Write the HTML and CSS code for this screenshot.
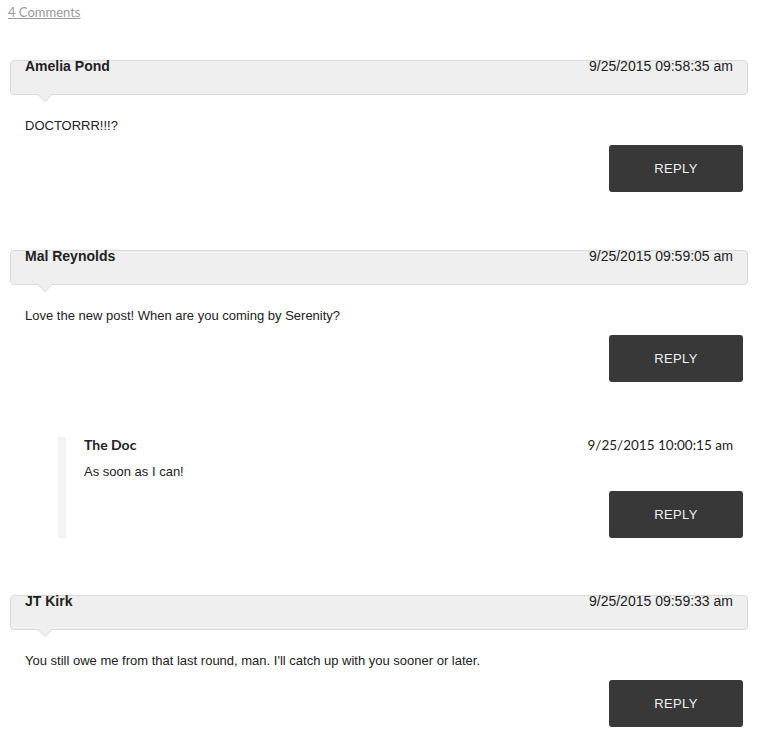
FILE: index.html
```html
<!DOCTYPE html>
<html>
<head>
<meta charset="utf-8">
<link rel="stylesheet" href="styles.css">
</head>
<body>
<div class="page">
  <a class="count" href="#">4 Comments</a>
  <ol class="comments">
    <li class="comment">
      <div class="comment-head">
        <span class="author">Amelia Pond</span>
        <span class="date">9/25/2015 09:58:35 am</span>
      </div>
      <p class="comment-text">DOCTORRR!!!?</p>
      <div class="actions"><button class="reply">REPLY</button></div>
    </li>
    <li class="comment thread">
      <div class="comment-head">
        <span class="author">Mal Reynolds</span>
        <span class="date">9/25/2015 09:59:05 am</span>
      </div>
      <p class="comment-text">Love the new post! When are you coming by Serenity?</p>
      <div class="actions"><button class="reply">REPLY</button></div>
      <ol class="children">
        <li class="child">
          <div class="child-head">
            <span class="child-author">The Doc</span>
            <span class="child-date">9/25/2015 10:00:15 am</span>
          </div>
          <p class="child-text">As soon as I can!</p>
          <div class="actions child-actions"><button class="reply">REPLY</button></div>
        </li>
      </ol>
    </li>
    <li class="comment">
      <div class="comment-head">
        <span class="author">JT Kirk</span>
        <span class="date">9/25/2015 09:59:33 am</span>
      </div>
      <p class="comment-text">You still owe me from that last round, man. I'll catch up with you sooner or later.</p>
      <div class="actions"><button class="reply">REPLY</button></div>
    </li>
  </ol>
</div>
</body>
</html>
```
FILE: styles.css
```css
html, body {
  margin: 0;
  padding: 0;
  background: #ffffff;
}

.page {
  padding: 4px 12px 0 10px;
  font-family: "Liberation Sans", Arial, sans-serif;
  color: #222222;
}

.count {
  display: block;
  margin-left: -2px;
  font-family: Lato, "Liberation Sans", sans-serif;
  font-size: 13px;
  line-height: 16px;
  color: #9a9a9a;
  text-decoration: underline;
}

.comments {
  list-style: none;
  margin: 40px 0 0 0;
  padding: 0;
}

.comment {
  margin: 0 0 58px 0;
  padding: 0;
}

.comment.thread {
  margin-bottom: 57px;
}

.comment-head {
  position: relative;
  box-sizing: border-box;
  height: 35px;
  display: flex;
  justify-content: space-between;
  align-items: flex-start;
  padding: 0 14px;
  background: #efefef;
  border: 1px solid #dadada;
  border-radius: 4px;
}

.comment-head::before {
  content: "";
  position: absolute;
  left: 26px;
  top: 100%;
  width: 0;
  height: 0;
  border-style: solid;
  border-width: 8px 8px 0 8px;
  border-color: #d6d6d6 transparent transparent transparent;
}

.comment-head::after {
  content: "";
  position: absolute;
  left: 27px;
  top: 100%;
  width: 0;
  height: 0;
  border-style: solid;
  border-width: 7px 7px 0 7px;
  border-color: #efefef transparent transparent transparent;
}

.author {
  margin-top: -3px;
  font-size: 14px;
  font-weight: bold;
  line-height: 16px;
  color: #222222;
}

.date {
  margin-top: -3px;
  font-size: 14px;
  line-height: 16px;
  color: #222222;
}

.comment-text {
  margin: 22px 0 0 0;
  padding-left: 15px;
  font-size: 13px;
  line-height: 18px;
  color: #222222;
}

.actions {
  display: flex;
  justify-content: flex-end;
  margin-top: 10px;
  padding-right: 5px;
}

.child-actions {
  margin-top: 10px;
}

.reply {
  width: 134px;
  height: 47px;
  padding: 0;
  border: none;
  border-radius: 3px;
  background: #383838;
  color: #f0f0f0;
  font-family: "Liberation Sans", Arial, sans-serif;
  font-size: 13px;
  letter-spacing: 0.4px;
  cursor: pointer;
}

.children {
  list-style: none;
  margin: 56px 0 0 48px;
  padding: 0;
}

.child {
  margin: 0;
  padding: 0 0 0 18px;
  border-left: 8px solid #f3f3f3;
}

.child-head {
  display: flex;
  justify-content: space-between;
  align-items: flex-start;
  margin-top: -1px;
  padding-right: 15px;
  font-family: Lato, "Liberation Sans", sans-serif;
  font-size: 14px;
  line-height: 16px;
  color: #222222;
}

.child-author {
  font-weight: bold;
}

.child-date {
  font-size: 13.5px;
}

.child-text {
  margin: 10px 0 0 0;
  font-size: 13px;
  line-height: 18px;
  color: #222222;
}
```
